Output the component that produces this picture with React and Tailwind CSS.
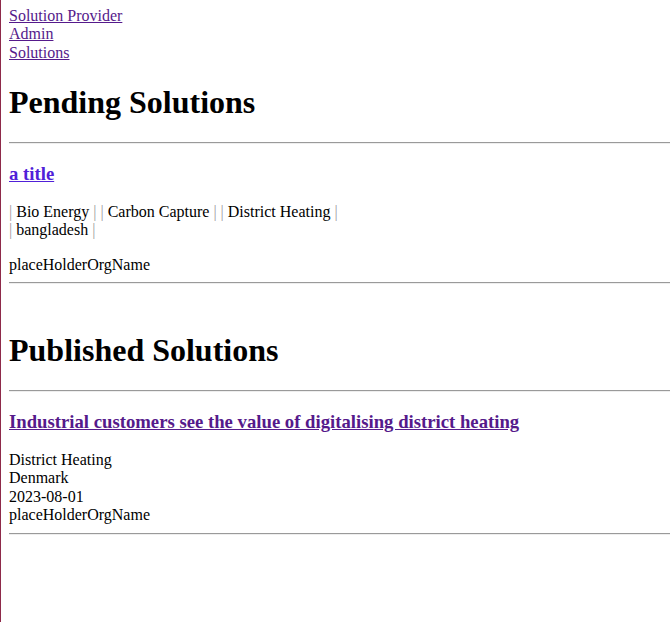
export default function App() {
  const pending = {
    title: "a title",
    categories: ["Bio Energy", "Carbon Capture", "District Heating"],
    countries: ["bangladesh"],
    org: "placeHolderOrgName",
  };

  const published = {
    title: "Industrial customers see the value of digitalising district heating",
    category: "District Heating",
    country: "Denmark",
    date: "2023-08-01",
    org: "placeHolderOrgName",
  };

  const pipe = <span className="text-[#9c9c9c]">|</span>;

  return (
    <div className="min-h-screen border-l border-[#8e2a4a] bg-white pl-[8px] pr-0 pt-[7px] pb-2 font-['Liberation_Serif',serif] text-[16px] leading-[18.4px] text-black">
      <div>
        <a href="#" className="underline text-[#551a8b]">Solution Provider</a>
      </div>
      <div>
        <a href="#" className="underline text-[#551a8b]">Admin</a>
      </div>
      <div>
        <a href="#" className="underline text-[#551a8b]">Solutions</a>
      </div>

      <h1 className="mt-[21.44px] mb-[21.44px] text-[32px] leading-[36.8px] font-bold">Pending Solutions</h1>
      <hr className="border-0 border-t border-b border-t-[#9a9a9a] border-b-[#eeeeee] h-[2px] mb-2" />

      <div>
        <h3 className="mt-[18.72px] mb-[18.72px] text-[18.72px] leading-[21.5px] font-bold">
          <a href="#" className="underline text-[#5020d8]">{pending.title}</a>
        </h3>
        <p className="mb-4">
          {pending.categories.map((c) => (
            <span key={c}>
              {pipe} {c} {pipe}{" "}
            </span>
          ))}
          <br />
          {pending.countries.map((c) => (
            <span key={c}>
              {pipe} {c} {pipe}
            </span>
          ))}
        </p>
        <p>{pending.org}</p>
        <hr className="border-0 border-t border-b border-t-[#9a9a9a] border-b-[#eeeeee] h-[2px] mt-2 mb-2" />
      </div>
      <br />

      <h1 className="mt-[21.44px] mb-[21.44px] text-[32px] leading-[36.8px] font-bold">Published Solutions</h1>
      <hr className="border-0 border-t border-b border-t-[#9a9a9a] border-b-[#eeeeee] h-[2px] mb-2" />

      <div>
        <h3 className="mt-[18.72px] mb-[18.72px] text-[18.72px] leading-[21.5px] font-bold">
          <a href="#" className="underline text-[#551a8b]">{published.title}</a>
        </h3>
        <div>
          <div>{published.category}</div>
          <div>{published.country}</div>
          <div>{published.date}</div>
          <div>{published.org}</div>
        </div>
        <hr className="border-0 border-t border-b border-t-[#9a9a9a] border-b-[#eeeeee] h-[2px] mt-2 mb-2" />
      </div>
    </div>
  );
}
